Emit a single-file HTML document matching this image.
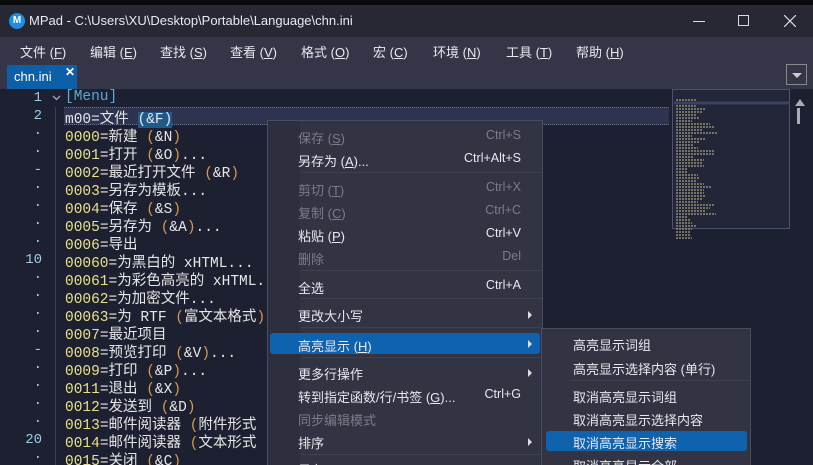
<!DOCTYPE html>
<html><head><meta charset="utf-8"><style>
*{margin:0;padding:0;box-sizing:border-box}
html,body{width:813px;height:465px;overflow:hidden}
body{background:#1d2030;position:relative;font-family:"Liberation Sans","Noto Sans CJK SC",sans-serif;color:#e8e8ee}
.abs{position:absolute}
#top{left:0;top:0;width:813px;height:5px;background:#0a0a0c}
#title{left:0;top:5px;width:813px;height:32px;background:#272834;font-size:13px;line-height:32px}
#menu{left:0;top:37px;width:813px;height:28px;background:#343547;font-size:13px}
#menu span{position:absolute;top:5px}
#tabrow{left:0;top:65px;width:813px;height:24px;background:#343547}
#tab{left:7px;top:65px;width:70px;height:24px;background:#0d5fa8;font-size:13px;color:#fff}
.ln{position:absolute;width:42px;text-align:right;font-family:"Liberation Mono",monospace;font-size:14px;color:#9ecbe8}
.code{position:absolute;left:65px;font-family:"Liberation Mono","Noto Sans CJK SC",monospace;font-size:14.5px;color:#e6e6e6;white-space:pre}
.y{color:#e8e08a}.o{color:#d69a4a}
#ctx{left:267px;top:120px;width:276px;height:350px;background:#323343;border:1px solid #4a4c60}
#ctx .gut{position:absolute;left:0;top:0;width:32px;height:100%;background:#2e2f3e}
.mi{position:absolute;left:30px;font-size:13px;white-space:nowrap}
.mi.d{color:#7b7c88}
.sc{position:absolute;right:21px;font-size:12.5px}
.sep{position:absolute;left:33px;right:0;height:1px;background:#3e4052}
.arr{position:absolute;right:10px;width:0;height:0;border-left:4px solid #ddd;border-top:4px solid transparent;border-bottom:4px solid transparent}
#sub{left:541px;top:328px;width:210px;height:140px;background:#323343;border:1px solid #4a4c60}
</style></head><body>
<div id="top" class="abs"></div>
<div id="title" class="abs">
<div class="abs" style="left:9px;top:8px;width:16px;height:16px;border-radius:50%;background:#1d8fe0;color:#fff;font-size:10px;line-height:16px;text-align:center;font-weight:bold">M</div>
<span class="abs" style="left:29px;top:0">MPad - C:\Users\XU\Desktop\Portable\Language\chn.ini</span>
<div class="abs" style="left:693px;top:16px;width:12px;height:1px;background:#ddd"></div>
<div class="abs" style="left:738px;top:10px;width:11px;height:11px;border:1px solid #ddd"></div>
<svg class="abs" style="left:784px;top:10px" width="12" height="12"><path d="M0 0L12 12M12 0L0 12" stroke="#ddd" stroke-width="1.2"/></svg>
</div>
<div id="menu" class="abs">
<span style="left:20px">文件 (<u>F</u>)</span><span style="left:90px">编辑 (<u>E</u>)</span><span style="left:160px">查找 (<u>S</u>)</span><span style="left:230px">查看 (<u>V</u>)</span><span style="left:301px">格式 (<u>O</u>)</span><span style="left:373px">宏 (<u>C</u>)</span><span style="left:433px">环境 (<u>N</u>)</span><span style="left:506px">工具 (<u>T</u>)</span><span style="left:576px">帮助 (<u>H</u>)</span>
</div>
<div id="tabrow" class="abs"></div>
<div id="tab" class="abs"><span class="abs" style="left:7px;top:4px">chn.ini</span><span class="abs" style="left:58px;top:0;font-weight:bold;font-size:12px">✕</span></div>
<div class="abs" style="left:786px;top:64px;width:21px;height:21px;border:1px solid #888"><div class="abs" style="left:5px;top:8px;border-top:5px solid #ccc;border-left:5px solid transparent;border-right:5px solid transparent"></div></div>
<div class="abs" style="left:55px;top:107px;width:1px;height:358px;background:#3a4058"></div>
<div class="abs" style="left:64px;top:107px;width:605px;height:18px;background:#2e3450;border-top:1px dotted #6a7090;border-bottom:1px dotted #6a7090"></div>
<svg class="abs" style="left:52px;top:95px" width="9" height="6"><path d="M1 1L4.5 4.5L8 1" stroke="#9ab" fill="none" stroke-width="1.3"/></svg>

<div class="ln" style="top:90px">1</div><div class="ln" style="top:108px">2</div>
<div class="ln" style="top:126px">·</div><div class="ln" style="top:144px">·</div><div class="ln" style="top:162px">-</div><div class="ln" style="top:180px">·</div><div class="ln" style="top:198px">·</div><div class="ln" style="top:216px">·</div><div class="ln" style="top:234px">·</div><div class="ln" style="top:252px">10</div><div class="ln" style="top:270px">·</div><div class="ln" style="top:288px">·</div><div class="ln" style="top:306px">·</div><div class="ln" style="top:324px">·</div><div class="ln" style="top:342px">-</div><div class="ln" style="top:360px">·</div><div class="ln" style="top:378px">·</div><div class="ln" style="top:396px">·</div><div class="ln" style="top:414px">·</div><div class="ln" style="top:432px">20</div><div class="ln" style="top:450px">·</div>

<div class="code" style="top:89px;color:#5aa8d8">[Menu]</div>
<div class="code" style="top:107px">m00=文件 <span style="background:#1f5a8a">(&amp;F)</span></div>
<div class="code" style="top:125px"><span class="y">0000</span>=新建 <span class="o">(</span>&amp;N<span class="o">)</span></div>
<div class="code" style="top:143px"><span class="y">0001</span>=打开 <span class="o">(</span>&amp;O<span class="o">)</span>...</div>
<div class="code" style="top:161px"><span class="y">0002</span>=最近打开文件 <span class="o">(</span>&amp;R<span class="o">)</span></div>
<div class="code" style="top:179px"><span class="y">0003</span>=另存为模板...</div>
<div class="code" style="top:197px"><span class="y">0004</span>=保存 <span class="o">(</span>&amp;S<span class="o">)</span></div>
<div class="code" style="top:215px"><span class="y">0005</span>=另存为 <span class="o">(</span>&amp;A<span class="o">)</span>...</div>
<div class="code" style="top:233px"><span class="y">0006</span>=导出</div>
<div class="code" style="top:251px"><span class="y">00060</span>=为黑白的 xHTML...</div>
<div class="code" style="top:269px"><span class="y">00061</span>=为彩色高亮的 xHTML.</div>
<div class="code" style="top:287px"><span class="y">00062</span>=为加密文件...</div>
<div class="code" style="top:305px"><span class="y">00063</span>=为 RTF <span class="o">(</span>富文本格式<span class="o">)</span></div>
<div class="code" style="top:323px"><span class="y">0007</span>=最近项目</div>
<div class="code" style="top:341px"><span class="y">0008</span>=预览打印 <span class="o">(</span>&amp;V<span class="o">)</span>...</div>
<div class="code" style="top:359px"><span class="y">0009</span>=打印 <span class="o">(</span>&amp;P<span class="o">)</span>...</div>
<div class="code" style="top:377px"><span class="y">0011</span>=退出 <span class="o">(</span>&amp;X<span class="o">)</span></div>
<div class="code" style="top:395px"><span class="y">0012</span>=发送到 <span class="o">(</span>&amp;D<span class="o">)</span></div>
<div class="code" style="top:413px"><span class="y">0013</span>=邮件阅读器 <span class="o">(</span>附件形式</div>
<div class="code" style="top:431px"><span class="y">0014</span>=邮件阅读器 <span class="o">(</span>文本形式</div>
<div class="code" style="top:449px"><span class="y">0015</span>=关闭 <span class="o">(</span>&amp;C<span class="o">)</span></div>

<!-- minimap -->
<div class="abs" style="left:672px;top:89px;width:118px;height:376px;background:#1d2030"></div>
<div class="abs" style="left:672px;top:89px;width:118px;height:140px;background:#222638;border:1px solid #4a5272"></div>
<svg class="abs" style="left:674px;top:92px" width="116" height="175">
<g stroke="#8f8c70" stroke-width="1.5" stroke-dasharray="2 1">
<path d="M2 8h20M2 11h22M2 14h20M2 17h30M2 20h26M2 23h20M2 26h24M2 29h16M2 32h34M2 35h38M2 38h26M2 41h42M2 44h16M2 47h30M2 50h24M2 53h18M2 56h22M2 59h38M2 62h38M2 65h18M2 68h28M2 71h26M2 74h28M2 77h12M2 80h12M2 83h22M2 86h24M2 89h20M2 92h28M2 95h36M2 98h28M2 101h28M2 104h30M2 107h26M2 110h22M2 113h38M2 116h34M2 119h30M2 122h40M2 125h12M2 128h14M2 131h16M2 134h20M2 137h16M2 140h14M2 143h14M2 146h16"/></g>
<path d="M0 11h116" stroke="#3a4260" stroke-width="3"/></svg>
<div class="abs" style="left:795px;top:99px;border-bottom:7px solid #aab;border-left:5px solid transparent;border-right:5px solid transparent"></div>
<div class="abs" style="left:797px;top:108px;width:3px;height:16px;background:#aab"></div>

<div id="ctx" class="abs"><div class="gut"></div>
<div class="mi d" style="top:7px">保存 (<u>S</u>)</div><div class="sc" style="top:7px;color:#7b7c88">Ctrl+S</div>
<div class="mi" style="top:30px">另存为 (<u>A</u>)...</div><div class="sc" style="top:30px">Ctrl+Alt+S</div>
<div class="sep" style="top:51px"></div>
<div class="mi d" style="top:59px">剪切 (<u>T</u>)</div><div class="sc" style="top:59px;color:#7b7c88">Ctrl+X</div>
<div class="mi d" style="top:82px">复制 (<u>C</u>)</div><div class="sc" style="top:82px;color:#7b7c88">Ctrl+C</div>
<div class="mi" style="top:105px">粘贴 (<u>P</u>)</div><div class="sc" style="top:105px">Ctrl+V</div>
<div class="mi d" style="top:128px">删除</div><div class="sc" style="top:128px;color:#7b7c88">Del</div>
<div class="sep" style="top:149px"></div>
<div class="mi" style="top:157px">全选</div><div class="sc" style="top:157px">Ctrl+A</div>
<div class="sep" style="top:177px"></div>
<div class="mi" style="top:185px">更改大小写</div><div class="arr" style="top:190px"></div>
<div class="sep" style="top:206px"></div>
<div class="abs" style="left:2px;top:212px;width:270px;height:21px;background:#0f62ad;border-radius:3px"></div>
<div class="mi" style="top:215px">高亮显示 (<u>H</u>)</div><div class="arr" style="top:219px"></div>
<div class="sep" style="top:236px"></div>
<div class="mi" style="top:243px">更多行操作</div><div class="arr" style="top:248px"></div>
<div class="mi" style="top:266px">转到指定函数/行/书签 (<u>G</u>)...</div><div class="sc" style="top:266px">Ctrl+G</div>
<div class="mi d" style="top:289px">同步编辑模式</div>
<div class="mi" style="top:312px">排序</div><div class="arr" style="top:317px"></div>
<div class="sep" style="top:333px"></div>
<div class="mi" style="top:339px">另存</div>
</div>

<div id="sub" class="abs">
<div class="mi" style="left:31px;top:6px">高亮显示词组</div>
<div class="mi" style="left:31px;top:30px">高亮显示选择内容 (单行)</div>
<div class="sep" style="left:28px;top:51px"></div>
<div class="mi" style="left:31px;top:58px">取消高亮显示词组</div>
<div class="mi" style="left:31px;top:81px">取消高亮显示选择内容</div>
<div class="abs" style="left:4px;top:102px;width:201px;height:20px;background:#0f62ad;border-radius:3px"></div>
<div class="mi" style="left:31px;top:104px">取消高亮显示搜索</div>
<div class="mi" style="left:31px;top:127px">取消高亮显示全部</div>
</div>
</body></html>
